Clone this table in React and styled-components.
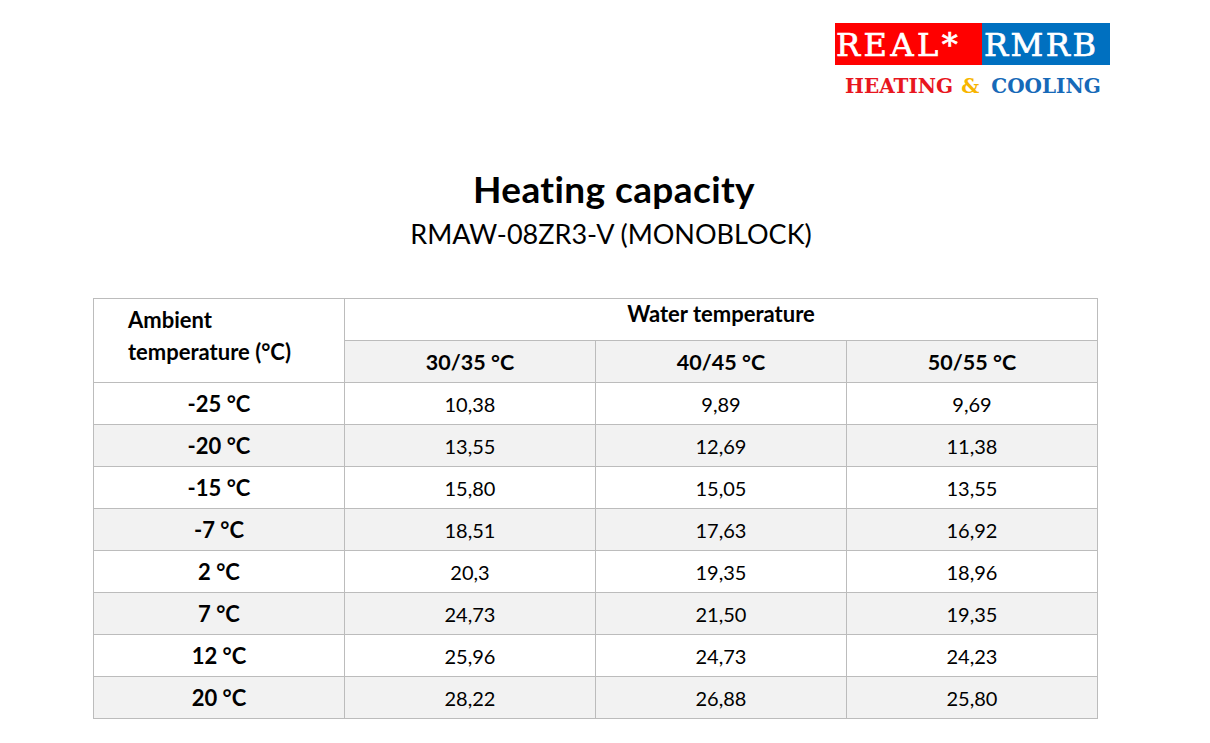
import React from "react";
import styled, { createGlobalStyle } from "styled-components";

const GlobalStyle = createGlobalStyle`
  html, body {
    margin: 0;
    padding: 0;
    background: #ffffff;
  }
  body {
    font-family: Lato, "Open Sans", sans-serif;
    font-variant-ligatures: none;
    color: #000;
  }
`;

const Page = styled.div`
  width: 1210px;
  height: 743px;
  padding-top: 23px;
  box-sizing: border-box;
  overflow: hidden;
`;

const LogoBar = styled.div`
  display: flex;
  justify-content: flex-end;
  padding-right: 100px;
`;

const Logo = styled.div`
  display: flex;
  flex-direction: column;
  width: 275px;
  font-family: "DejaVu Serif", "Liberation Serif", serif;
`;

const LogoTop = styled.div`
  display: flex;
  height: 42px;
`;

const LogoBlock = styled.div`
  width: ${(p) => p.$w}px;
  background: ${(p) => p.$bg};
  color: #fff;
  font-size: 32px;
  line-height: 44px;
  letter-spacing: ${(p) => p.$ls}px;
  padding-left: ${(p) => p.$pad}px;
  box-sizing: border-box;
  white-space: nowrap;
  overflow: hidden;
  -webkit-text-stroke: 0.7px #fff;
`;

const Tagline = styled.div`
  display: flex;
  align-items: baseline;
  padding: 8px 0 0 10px;
  font-weight: bold;
  font-size: 20px;
  line-height: 26px;
  white-space: nowrap;
`;

const TagWord = styled.span`
  color: ${(p) => p.$color};
  margin-right: ${(p) => p.$mr}px;
`;

const TitleBlock = styled.div`
  margin-top: 68px;
  padding-left: 18px;
  text-align: center;
`;

const Title = styled.h1`
  margin: 0;
  font-size: 37px;
  line-height: 44px;
  font-weight: 700;
  letter-spacing: 0.4px;
`;

const Subtitle = styled.div`
  margin-top: 5px;
  font-size: 27px;
  line-height: 36px;
  font-weight: 400;
  padding-right: 6px;
`;

const Table = styled.table`
  margin: 46px 0 0 93px;
  width: 1005px;
  border-collapse: collapse;
  table-layout: fixed;
`;

const Row = styled.tr`
  height: 42px;
  background: ${(p) => (p.$shade ? "#f2f2f2" : "#ffffff")};
`;

const Cell = styled.td`
  border: 1px solid #bcbcbc;
  padding: 0;
  height: 41px;
  text-align: center;
  vertical-align: middle;
  font-size: ${(p) => (p.$bold ? "22px" : "20px")};
  font-weight: ${(p) => (p.$bold ? 700 : 400)};
`;

const AmbientHead = styled.th`
  border: 1px solid #bcbcbc;
  background: #ffffff;
  text-align: left;
  vertical-align: top;
  padding: 5px 0 0 34px;
  font-size: 22px;
  line-height: 32px;
  font-weight: 700;
`;

const GroupHead = styled.th`
  border: 1px solid #bcbcbc;
  background: #ffffff;
  vertical-align: top;
  padding-top: 1px;
  font-size: 22px;
  line-height: 28px;
  font-weight: 700;
`;

const SubHead = styled.th`
  border: 1px solid #bcbcbc;
  background: #f2f2f2;
  font-size: 21.5px;
  font-weight: 700;
  padding-top: 2px;
`;

const rows = [
  ["-25 °C", "10,38", "9,89", "9,69"],
  ["-20 °C", "13,55", "12,69", "11,38"],
  ["-15 °C", "15,80", "15,05", "13,55"],
  ["-7 °C", "18,51", "17,63", "16,92"],
  ["2 °C", "20,3", "19,35", "18,96"],
  ["7 °C", "24,73", "21,50", "19,35"],
  ["12 °C", "25,96", "24,73", "24,23"],
  ["20 °C", "28,22", "26,88", "25,80"],
];

export default function App() {
  return (
    <Page>
      <GlobalStyle />
      <LogoBar>
        <Logo>
          <LogoTop>
            <LogoBlock $w={147} $bg="#ff0000" $ls={3.5} $pad={1}>
              REAL*
            </LogoBlock>
            <LogoBlock $w={128} $bg="#0070c0" $ls={2.5} $pad={2}>
              RMRB
            </LogoBlock>
          </LogoTop>
          <Tagline>
            <TagWord $color="#e8161e" $mr={8}>HEATING</TagWord>
            <TagWord $color="#f7b500" $mr={12}>&amp;</TagWord>
            <TagWord $color="#1669b8" $mr={0}>COOLING</TagWord>
          </Tagline>
        </Logo>
      </LogoBar>

      <TitleBlock>
        <Title>Heating capacity</Title>
        <Subtitle>RMAW-08ZR3-V (MONOBLOCK)</Subtitle>
      </TitleBlock>

      <Table>
        <thead>
          <Row>
            <AmbientHead rowSpan={2}>
              Ambient
              <br />
              temperature (°C)
            </AmbientHead>
            <GroupHead colSpan={3}>Water temperature</GroupHead>
          </Row>
          <Row $shade>
            <SubHead>30/35 °C</SubHead>
            <SubHead>40/45 °C</SubHead>
            <SubHead>50/55 °C</SubHead>
          </Row>
        </thead>
        <tbody>
          {rows.map((r, i) => (
            <Row key={r[0]} $shade={i % 2 === 1}>
              <Cell $bold>{r[0]}</Cell>
              <Cell>{r[1]}</Cell>
              <Cell>{r[2]}</Cell>
              <Cell>{r[3]}</Cell>
            </Row>
          ))}
        </tbody>
      </Table>
    </Page>
  );
}
